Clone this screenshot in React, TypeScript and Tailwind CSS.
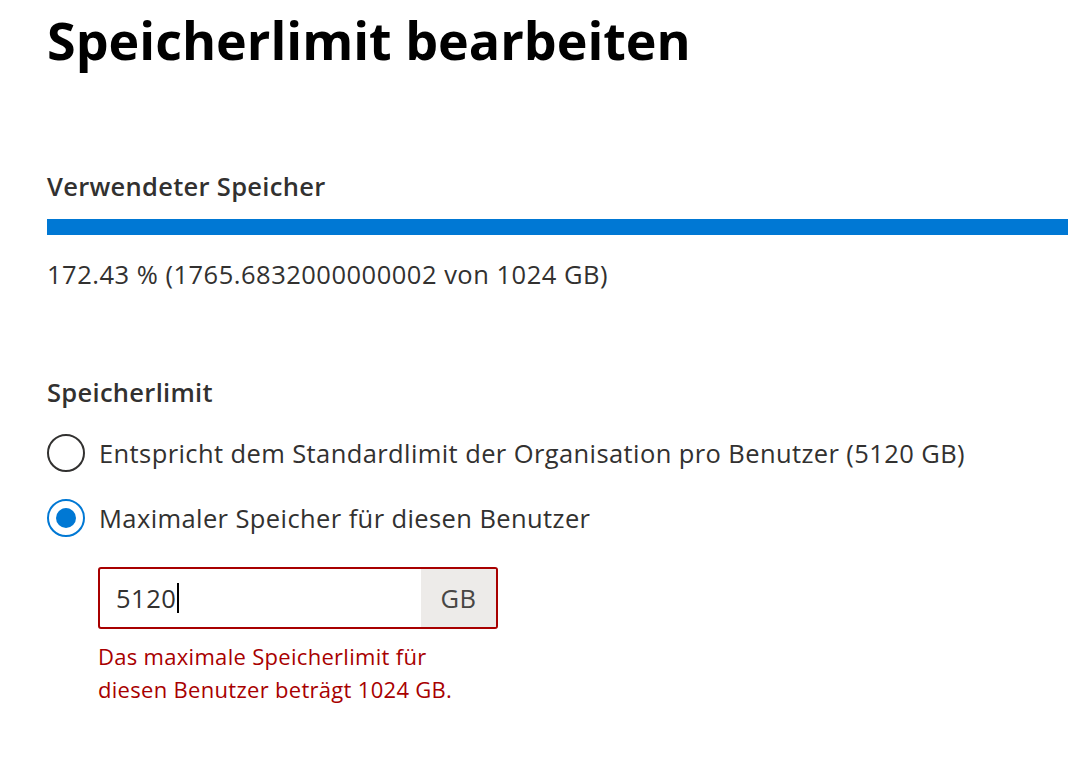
import React from 'react'

const font = { fontFamily: '"Open Sans", "Noto Sans", sans-serif' }

const Radio = ({ checked, label }: { checked?: boolean; label: string }) => {
  return (
    <div className="flex items-center gap-[14px]">
      {checked ? (
        <span className="flex h-[38px] w-[38px] shrink-0 items-center justify-center rounded-full border-2 border-[#0078d4]">
          <span className="h-[20px] w-[20px] rounded-full bg-[#0078d4]" />
        </span>
      ) : (
        <span className="h-[38px] w-[38px] shrink-0 rounded-full border-2 border-[#323130]" />
      )}
      <span className="text-[25.5px] leading-[32px] tracking-[0.4px] text-[#323130]">{label}</span>
    </div>
  )
}

export default function App() {
  return (
    <div className="min-h-screen overflow-hidden bg-white pl-[47px]" style={font}>
      <h1 className="mt-[4px] text-[52px] font-bold leading-[72px] text-black">
        Speicherlimit bearbeiten
      </h1>

      <h2 className="mt-[94px] text-[25.5px] font-semibold leading-[32px] tracking-[0.3px] text-[#323130]">
        Verwendeter Speicher
      </h2>
      <div className="mt-[17px] h-[16px] w-full bg-[#0078d4]" />
      <p className="mt-[23px] text-[25.5px] leading-[32px] tracking-[0.5px] text-[#323130]">
        172.43 % (1765.6832000000002 von 1024 GB)
      </p>

      <h2 className="mt-[86px] text-[25.5px] font-semibold leading-[32px] tracking-[0.3px] text-[#323130]">
        Speicherlimit
      </h2>
      <div className="mt-[26px] flex flex-col gap-[27px]">
        <Radio label="Entspricht dem Standardlimit der Organisation pro Benutzer (5120 GB)" />
        <Radio checked label="Maximaler Speicher für diesen Benutzer" />
      </div>

      <div className="ml-[51px] mt-[30px] flex h-[62px] w-[400px] overflow-hidden rounded-[3px] border-2 border-[#a80000]">
        <div className="flex flex-1 items-center pl-[16px] text-[25.5px] tracking-[0.5px] text-[#323130]">
          5120
          <span className="ml-[1px] h-[30px] w-[1.5px] bg-black" />
        </div>
        <div className="flex w-[75px] items-center justify-center bg-[#edebe9] text-[25.5px] tracking-[0.4px] text-[#484644]">
          GB
        </div>
      </div>
      <p className="ml-[51px] mt-[11px] w-[360px] text-[22px] leading-[33px] tracking-[0.3px] text-[#a80000]">
        Das maximale Speicherlimit für diesen Benutzer beträgt 1024 GB.
      </p>
    </div>
  )
}
